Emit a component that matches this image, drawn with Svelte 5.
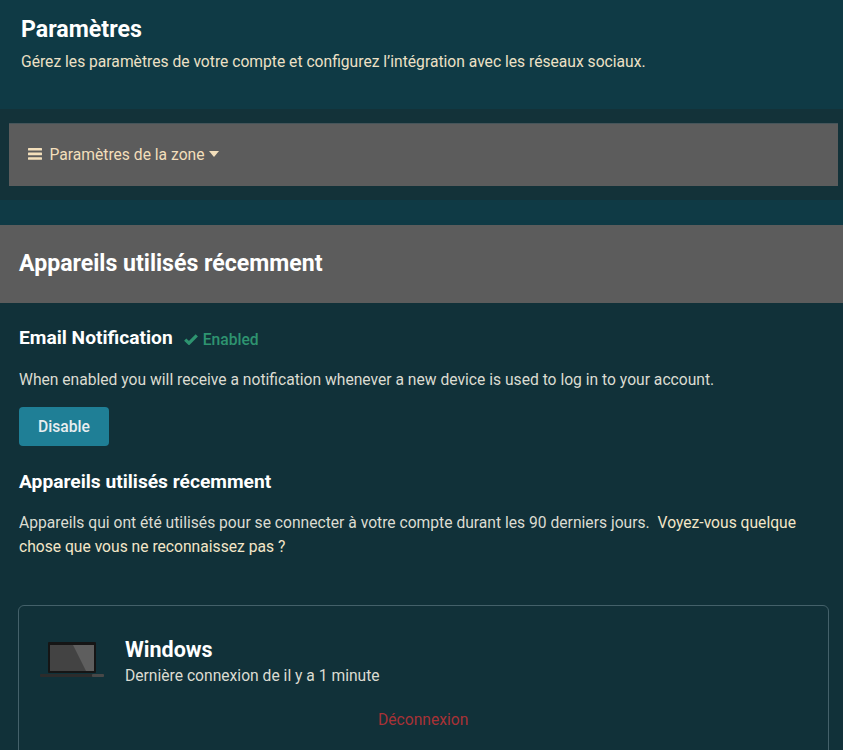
<script>
  const title = 'Appareils utilisés récemment';
</script>

<div class="page">
  <header class="top">
    <h1>Paramètres</h1>
    <p>Gérez les paramètres de votre compte et configurez l’intégration avec les réseaux sociaux.</p>
  </header>
  <div class="strip">
    <nav class="zone">
      <svg class="bars" width="14" height="12" viewBox="0 0 14 12"><rect y="0" width="14" height="2.6" rx=".5"/><rect y="4.6" width="14" height="2.6" rx=".5"/><rect y="9.2" width="14" height="2.6" rx=".5"/></svg>
      <span>Paramètres de la zone</span>
      <svg class="caret" width="10" height="6" viewBox="0 0 10 6"><path d="M0 0h10L5 6z"/></svg>
    </nav>
  </div>
  <div class="gap"></div>
  <div class="banner"><h2>{title}</h2></div>
  <main>
    <div class="notif">
      <h3>Email Notification</h3>
      <span class="enabled">
        <svg width="14" height="11" viewBox="0 0 14 11"><path d="M1.2 5.6 5 9.2 12.8 1.4" fill="none" stroke="currentColor" stroke-width="3.2"/></svg>
        Enabled
      </span>
    </div>
    <p class="desc">When enabled you will receive a notification whenever a new device is used to log in to your account.</p>
    <button>Disable</button>
    <h3 class="sub">{title}</h3>
    <p class="long">Appareils qui ont été utilisés pour se connecter à votre compte durant les 90 derniers jours. <a href="#top">Voyez-vous quelque chose que vous ne reconnaissez pas ?</a></p>
    <section class="card">
      <div class="device">
        <svg class="laptop" width="64" height="36" viewBox="0 0 64 36">
          <rect x="8" y="0" width="48" height="31" rx="1" fill="#151515"/>
          <path d="M10 3h44v26H10z" fill="#434343"/>
          <path d="M33 3h21v26H46z" fill="#5e5e5e"/>
          <rect x="0" y="32" width="64" height="3" rx="1" fill="#2c2c2c"/>
          <rect x="52" y="32" width="12" height="3" rx="1" fill="#484848"/>
        </svg>
        <div>
          <div class="name">Windows</div>
          <div class="when">Dernière connexion de il y a 1 minute</div>
        </div>
      </div>
      <a class="logout" href="#top">Déconnexion</a>
    </section>
  </main>
</div>

<style>
  :global(body) {
    margin: 0;
    background: #113139;
  }
  .page {
    width: 843px;
    height: 750px;
    overflow: hidden;
    font-family: Roboto, "Liberation Sans", sans-serif;
    color: #dcdcd2;
    font-size: 15.65px;
  }
  .top {
    height: 109px;
    box-sizing: border-box;
    padding: 14px 21px 0;
    background: #0f3a45;
  }
  h1 {
    margin: 0;
    font-size: 23.2px;
    line-height: 30px;
    font-weight: 700;
    color: #fff;
  }
  .top p {
    margin: 7px 0 0;
    line-height: 22px;
    color: #ece0c6;
  }
  .strip {
    height: 91px;
    box-sizing: border-box;
    padding: 14px 5px 14px 9px;
    background: #133239;
  }
  .zone {
    height: 63px;
    box-sizing: border-box;
    display: flex;
    align-items: center;
    padding: 0 0 2px 19px;
    background: #5c5c5c;
    color: #f3dfbb;
    border-top: 1px solid #46555a;
  }
  .bars { fill: #f3dfbb; margin-right: 7.5px; }
  .caret { fill: #f3dfbb; margin-left: 4px; }
  .gap { height: 25px; background: #0f3a45; }
  .banner {
    height: 78px;
    display: flex;
    align-items: center;
    padding: 0 0 2px 19px;
    box-sizing: border-box;
    background: #5c5c5c;
  }
  h2 {
    margin: 0;
    font-size: 23.1px;
    font-weight: 700;
    color: #fff;
  }
  main { padding: 22px 14px 0 19px; }
  .notif {
    display: flex;
    align-items: center;
    height: 26px;
  }
  h3 {
    margin: 0;
    font-size: 19.2px;
    font-weight: 700;
    line-height: 26px;
    color: #fff;
  }
  .enabled {
    margin-left: 11px;
    margin-top: 2px;
    display: inline-flex;
    align-items: center;
    gap: 5px;
    font-weight: 500;
    color: #2e9470;
  }
  .desc {
    margin: 18px 0 0;
    line-height: 22px;
  }
  button {
    display: block;
    margin-top: 16px;
    width: 90px;
    height: 39px;
    padding: 0;
    border: 0;
    border-radius: 4px;
    background: #1f7f96;
    color: #e8eef0;
    font: 500 15.65px Roboto, "Liberation Sans", sans-serif;
  }
  .sub { margin-top: 23px; }
  .long {
    margin: 16px 0 0;
    line-height: 24px;
  }
  .long a { color: #f3e6c8; text-decoration: none; margin-left: 4px; }
  .card {
    margin: 46px 0 0 -1px;
    height: 300px;
    box-sizing: border-box;
    border: 1px solid #44616a;
    border-radius: 6px;
    padding: 31px 0 0 21px;
  }
  .device {
    display: flex;
    align-items: flex-start;
    gap: 21px;
  }
  .laptop { margin-top: 5px; flex: none; }
  .name {
    font-size: 21.5px;
    font-weight: 700;
    line-height: 26px;
    color: #fff;
  }
  .when { line-height: 26px; }
  .logout {
    display: block;
    margin-top: 21px;
    margin-left: 338px;
    color: #a83236;
    text-decoration: none;
  }
</style>
